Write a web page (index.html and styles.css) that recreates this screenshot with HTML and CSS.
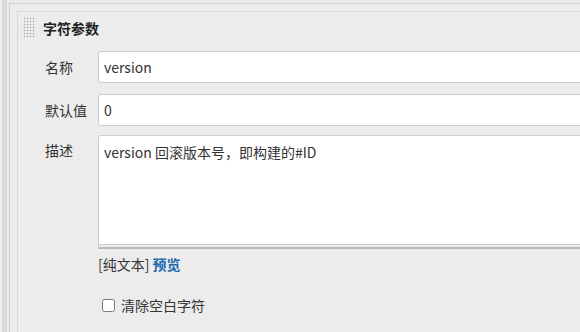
FILE: index.html
```html
<!DOCTYPE html>
<html lang="zh-CN">

<head>
  <meta charset="UTF-8" />
  <title>字符参数</title>
  <link rel="stylesheet" href="styles.css">
</head>

<body>
  <div class="page">
    <div class="side-strip"></div>
    <div class="outer-box">
      <div class="param-box">
        <div class="param-header">
          <span class="grip"></span>
          <h3>字符参数</h3>
        </div>

        <div class="form-row first">
          <label>名称</label>
          <input class="text-input" type="text" value="version">
        </div>
        <div class="form-row">
          <label>默认值</label>
          <input class="text-input" type="text" value="0">
        </div>
        <div class="form-row top">
          <label>描述</label>
          <div class="textarea-wrap">
            <textarea class="text-area">version 回滚版本号，即构建的#ID</textarea>
            <div class="textarea-handle"></div>
          </div>
        </div>

        <div class="preview-row">
          <span class="plain">[纯文本]</span> <a href="#" class="preview-link">预览</a>
        </div>

        <div class="check-row">
          <input type="checkbox" id="trim">
          <label for="trim">清除空白字符</label>
        </div>
      </div>
    </div>
  </div>
</body>

</html>
```

FILE: styles.css
```css
* {
  margin: 0;
  padding: 0;
  box-sizing: border-box;
  font-family: 'Noto Sans CJK SC', 'Noto Sans', sans-serif;
}

body {
  background: #ececec;
  color: #333;
  overflow: hidden;
  height: 332px;
}

.page {
  display: flex;
  height: 100%;
  padding-left: 2px;
}

.side-strip {
  flex-shrink: 0;
  width: 5px;
  background: #d9d9d9;
}

.outer-box {
  flex: 1;
  min-width: 0;
  margin-left: 2px;
  margin-top: 3px;
  padding: 7px 0 0 7px;
  border-left: 1px solid #cfcfcf;
  border-top: 1px solid #cfcfcf;
}

.param-box {
  height: 100%;
  border-left: 1px solid #d9d9d9;
  border-top: 1px solid #d9d9d9;
  padding: 5px 0 0 5px;
}

.param-header {
  display: flex;
  align-items: center;
  height: 21px;
}

.grip {
  flex-shrink: 0;
  width: 12px;
  height: 21px;
  background-color: #f4f4f4;
  background-image: radial-gradient(circle, #b5b5b5 0.8px, transparent 1.2px);
  background-size: 3px 3px;
}

.param-header h3 {
  margin-left: 8px;
  font-size: 14px;
  line-height: 20px;
  font-weight: bold;
  color: #222;
}

.form-row {
  display: flex;
  align-items: center;
  margin-left: 22px;
  margin-top: 11px;
}

.form-row.first {
  margin-top: 13px;
}

.form-row.top {
  align-items: flex-start;
  margin-top: 9px;
}

.form-row label {
  flex-shrink: 0;
  width: 53px;
  font-size: 14px;
  line-height: 20px;
  color: #333;
}

.form-row.top label {
  padding-top: 5px;
}

.text-input {
  flex-shrink: 0;
  width: 520px;
  height: 32px;
  border: 1px solid #ccc;
  border-radius: 3px;
  background: #fff;
  padding: 0 5px;
  font-size: 14px;
  color: #333;
}

.textarea-wrap {
  flex-shrink: 0;
  width: 520px;
}

.text-area {
  display: block;
  width: 100%;
  height: 109px;
  border: 1px solid #ccc;
  border-bottom: none;
  border-radius: 3px 3px 0 0;
  background: #fff;
  padding: 5px;
  font-size: 14px;
  line-height: 22px;
  color: #333;
  resize: none;
}

.textarea-handle {
  height: 5px;
  border-top: 1px solid #cbcbcb;
  border-left: 1px solid #ccc;
  border-bottom: 2px solid #b9b9b9;
  background: #ececec;
}

.preview-row {
  margin-left: 75px;
  margin-top: 5px;
  font-size: 14px;
  line-height: 20px;
}

.plain {
  color: #333;
}

.preview-link {
  color: #2068b0;
  font-weight: bold;
  text-decoration: none;
}

.check-row {
  display: flex;
  align-items: center;
  margin-left: 79px;
  margin-top: 21px;
}

.check-row input {
  width: 13px;
  height: 13px;
  margin: 0;
}

.check-row label {
  margin-left: 6px;
  font-size: 14px;
  line-height: 20px;
}
```
